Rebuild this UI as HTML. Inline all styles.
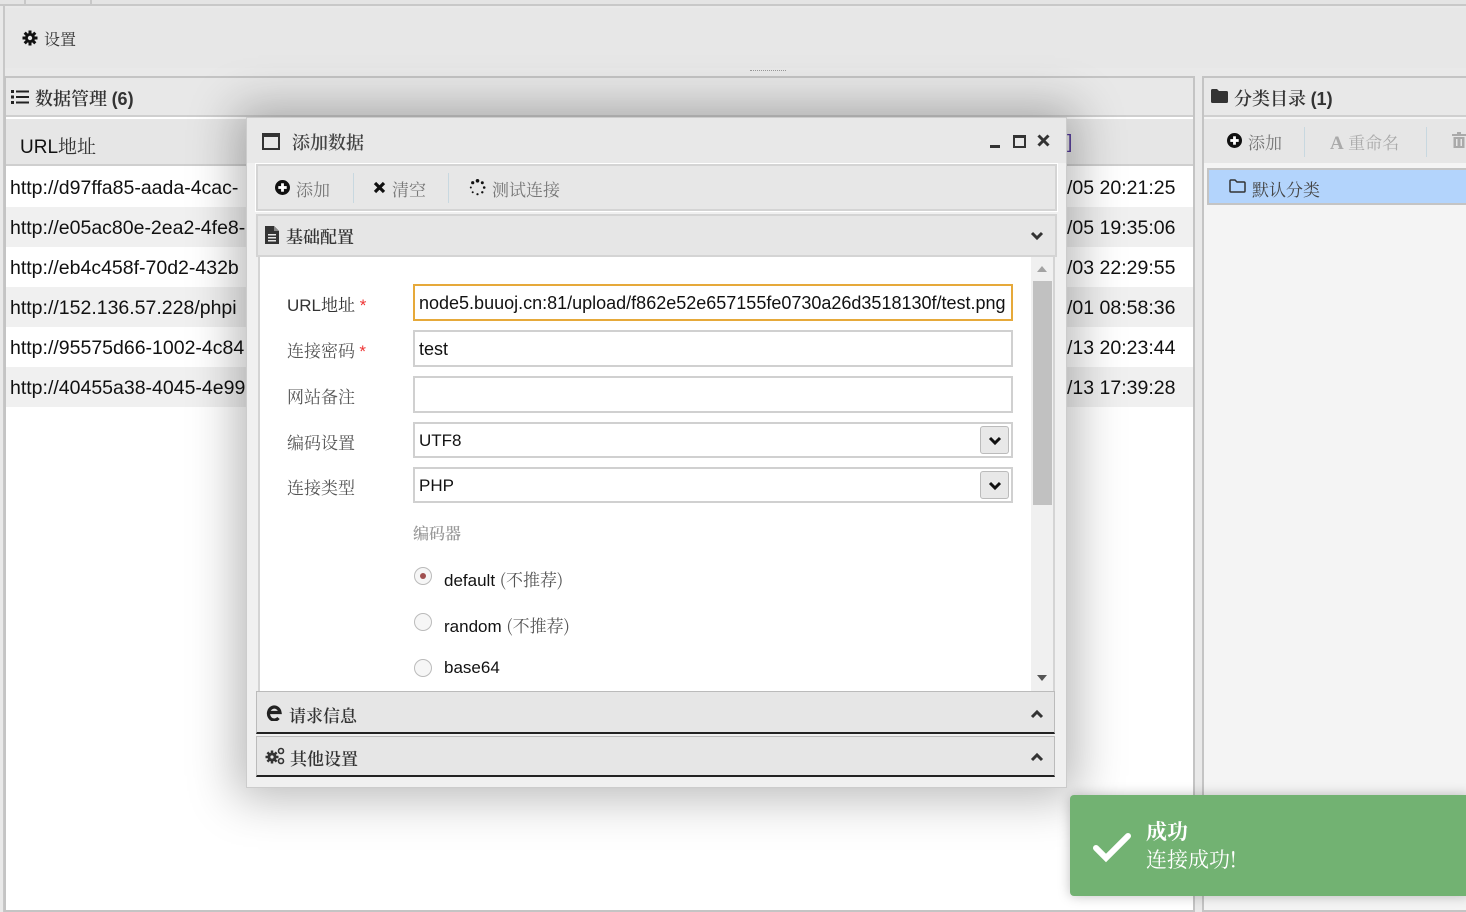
<!DOCTYPE html>
<html><head><meta charset="utf-8"><style>
*{box-sizing:border-box;margin:0;padding:0}
body{width:1466px;height:912px;overflow:hidden;background:#e9e9e9;font-family:"Liberation Sans","Noto Sans CJK SC",sans-serif;position:relative;color:#333}
.a{position:absolute}
.cn{font-family:"Noto Serif CJK SC","Liberation Serif",serif}
.url{font-family:"Liberation Sans",sans-serif;font-size:19.5px;color:#111}
svg{display:block}
</style></head><body>
<div class="a" style="left:0;top:0;width:1466px;height:6px;background:#e4e4e4;border-bottom:2px solid #c8c8c8"></div>
<div class="a" style="left:24px;top:0;width:2px;height:6px;background:#c8c8c8"></div>
<div class="a" style="left:90px;top:0;width:2px;height:6px;background:#c8c8c8"></div>
<div class="a" style="left:3px;top:6px;width:2px;height:906px;background:#c8c8c8"></div>
<div class="a" style="left:5px;top:8px;width:1461px;height:60px;background:#e7e7e7"></div>
<svg class="a" style="left:22px;top:30px" width="16" height="16" viewBox="0 0 16 16"><g fill="#111"><circle cx="8" cy="8" r="5"/><rect x="6.5" y="0.5" width="3" height="15"/><rect x="0.5" y="6.5" width="15" height="3"/><rect x="6.5" y="0.5" width="3" height="15" transform="rotate(45 8 8)"/><rect x="6.5" y="0.5" width="3" height="15" transform="rotate(-45 8 8)"/></g><circle cx="8" cy="8" r="2.2" fill="#e7e7e7"/></svg>
<div class="a cn" style="left:44px;top:27px;font-size:16px;color:#333">设置</div>
<div class="a" style="left:750px;top:70px;width:36px;border-top:1px dotted #999"></div>
<div class="a" style="left:4px;top:76px;width:1191px;height:836px;background:#fff;border:2px solid #c4c4c4"></div>
<div class="a" style="left:6px;top:78px;width:1187px;height:39px;background:#e8e8e8;border-bottom:2px solid #cfcfcf"></div>
<svg class="a" style="left:11px;top:90px" width="18" height="14" viewBox="0 0 18 14"><g fill="#222"><rect x="0" y="0" width="3" height="3"/><rect x="0" y="5.5" width="3" height="3"/><rect x="0" y="11" width="3" height="3"/><rect x="5" y="0.5" width="13" height="2"/><rect x="5" y="6" width="13" height="2"/><rect x="5" y="11.5" width="13" height="2"/></g></svg>
<div class="a cn" style="left:35px;top:85px;font-size:18px;color:#333;font-weight:600">数据管理 <b style="font-family:'Liberation Sans'">(6)</b></div>
<div class="a" style="left:6px;top:119px;width:1187px;height:47px;background:#e6e6e6;border-bottom:2px solid #cfcfcf"></div>
<div class="a" style="left:20px;top:132px;font-size:19px;color:#111">URL<span class="cn" style="color:#333">地址</span></div>
<div class="a" style="left:1067px;top:132px;font-size:19px;color:#52379a">]</div>
<div class="a" style="left:6px;top:167px;width:1187px;height:40px;background:#fff"></div>
<div class="a" style="left:6px;top:207px;width:1187px;height:40px;background:#f0f0f0"></div>
<div class="a" style="left:6px;top:247px;width:1187px;height:40px;background:#fff"></div>
<div class="a" style="left:6px;top:287px;width:1187px;height:40px;background:#f0f0f0"></div>
<div class="a" style="left:6px;top:327px;width:1187px;height:40px;background:#fff"></div>
<div class="a" style="left:6px;top:367px;width:1187px;height:40px;background:#f0f0f0"></div>
<div class="a url" style="left:10px;top:177px">http://d97ffa85-aada-4cac-</div>
<div class="a url" style="left:10px;top:217px">http://e05ac80e-2ea2-4fe8-</div>
<div class="a url" style="left:10px;top:257px">http://eb4c458f-70d2-432b</div>
<div class="a url" style="left:10px;top:297px">http://152.136.57.228/phpi</div>
<div class="a url" style="left:10px;top:337px">http://95575d66-1002-4c84</div>
<div class="a url" style="left:10px;top:377px">http://40455a38-4045-4e99</div>
<div class="a url" style="left:1067px;top:177px">/05 20:21:25</div>
<div class="a url" style="left:1067px;top:217px">/05 19:35:06</div>
<div class="a url" style="left:1067px;top:257px">/03 22:29:55</div>
<div class="a url" style="left:1067px;top:297px">/01 08:58:36</div>
<div class="a url" style="left:1067px;top:337px">/13 20:23:44</div>
<div class="a url" style="left:1067px;top:377px">/13 17:39:28</div>
<div class="a" style="left:1202px;top:76px;width:270px;height:836px;background:#f4f4f4;border:2px solid #c4c4c4"></div>
<div class="a" style="left:1204px;top:78px;width:262px;height:39px;background:#e8e8e8;border-bottom:2px solid #cfcfcf"></div>
<svg class="a" style="left:1211px;top:89px" width="17" height="14" viewBox="0 0 17 14"><path d="M0 1.5Q0 0 1.5 0H6L8 2H15.5Q17 2 17 3.5V12.5Q17 14 15.5 14H1.5Q0 14 0 12.5Z" fill="#333"/></svg>
<div class="a cn" style="left:1234px;top:85px;font-size:18px;color:#333;font-weight:600">分类目录 <b style="font-family:'Liberation Sans'">(1)</b></div>
<div class="a" style="left:1204px;top:119px;width:262px;height:44px;background:#e6e6e6"></div>
<svg class="a" style="left:1227px;top:133px" width="15" height="15" viewBox="0 0 16 16"><circle cx="8" cy="8" r="8" fill="#111"/><rect x="6.5" y="3.5" width="3" height="9" fill="#fff"/><rect x="3.5" y="6.5" width="9" height="3" fill="#fff"/></svg>
<div class="a cn" style="left:1248px;top:129px;font-size:17px;color:#777">添加</div>
<div class="a" style="left:1304px;top:127px;width:1px;height:30px;background:#c8d8e0"></div>
<div class="a cn" style="left:1330px;top:129px;font-size:17px;color:#aaa"><b style="font-family:'Liberation Serif';font-size:19px">A</b> 重命名</div>
<div class="a" style="left:1426px;top:127px;width:1px;height:30px;background:#c8d8e0"></div>
<svg class="a" style="left:1452px;top:132px" width="14" height="16" viewBox="0 0 14 16"><rect x="0" y="2" width="14" height="2" fill="#aaa"/><rect x="5" y="0" width="4" height="2" fill="#aaa"/><path d="M1.5 5H12.5V16H1.5Z" fill="#aaa"/><rect x="4" y="7" width="1.5" height="7" fill="#e6e6e6"/><rect x="8.5" y="7" width="1.5" height="7" fill="#e6e6e6"/></svg>
<div class="a" style="left:1207px;top:168px;width:259px;height:37px;background:#b3d4fc;border:2px solid #c4c4c4;border-right:none"></div>
<svg class="a" style="left:1229px;top:179px" width="17" height="14" viewBox="0 0 17 14"><path d="M1 2Q1 1 2 1H6L8 3H15Q16 3 16 4V12Q16 13 15 13H2Q1 13 1 12Z" fill="none" stroke="#333" stroke-width="1.5"/></svg>
<div class="a cn" style="left:1252px;top:176px;font-size:17px;color:#444">默认分类</div>
<!-- dialog -->
<div class="a" style="left:246px;top:117px;width:821px;height:671px;background:#f0f0f0;border:1px solid #ccc;box-shadow:0 0 45px 10px rgba(0,0,0,.28)"></div>
<div class="a" style="left:247px;top:118px;width:819px;height:45px;background:#e8e8e8"></div>
<div class="a" style="left:262px;top:133px;width:18px;height:17px;border:2px solid #333;border-top-width:4px"></div>
<div class="a cn" style="left:292px;top:129px;font-size:18px;color:#444;font-weight:600">添加数据</div>
<div class="a" style="left:990px;top:145px;width:10px;height:3px;background:#333"></div>
<div class="a" style="left:1013px;top:135px;width:13px;height:13px;border:2px solid #333;border-top-width:3px"></div>
<svg class="a" style="left:1037px;top:134px" width="13" height="13" viewBox="0 0 13 13"><path d="M1.5 1.5L11.5 11.5M11.5 1.5L1.5 11.5" stroke="#333" stroke-width="3"/></svg>
<div class="a" style="left:256px;top:164px;width:801px;height:47px;background:#e7e7e7;border:2px solid #d4d4d4;outline:1px solid #fff"></div>
<svg class="a" style="left:275px;top:180px" width="15" height="15" viewBox="0 0 16 16"><circle cx="8" cy="8" r="8" fill="#111"/><rect x="6.5" y="3.5" width="3" height="9" fill="#fff"/><rect x="3.5" y="6.5" width="9" height="3" fill="#fff"/></svg>
<div class="a cn" style="left:296px;top:176px;font-size:17px;color:#777">添加</div>
<div class="a" style="left:353px;top:173px;width:1px;height:30px;background:#c8d8e0"></div>
<svg class="a" style="left:373px;top:181px" width="13" height="13" viewBox="0 0 13 13"><path d="M2 2L11 11M11 2L2 11" stroke="#111" stroke-width="3.2"/></svg>
<div class="a cn" style="left:392px;top:176px;font-size:17px;color:#777">清空</div>
<div class="a" style="left:448px;top:173px;width:1px;height:30px;background:#c8d8e0"></div>
<svg class="a" style="left:469px;top:179px" width="17" height="17" viewBox="0 0 17 17"><g fill="#111"><circle cx="8.5" cy="1.8" r="1.8"/><circle cx="13.3" cy="3.7" r="1.5"/><circle cx="15.2" cy="8.5" r="1.3"/><circle cx="13.3" cy="13.3" r="1.2"/><circle cx="8.5" cy="15.2" r="1.1"/><circle cx="3.7" cy="13.3" r="1"/><circle cx="1.8" cy="8.5" r="1"/><circle cx="3.7" cy="3.7" r="1.6"/></g></svg>
<div class="a cn" style="left:492px;top:176px;font-size:17px;color:#777">测试连接</div>
<div class="a" style="left:256px;top:214px;width:801px;height:43px;background:#e6e6e6;border:2px solid #d4d4d4"></div>
<svg class="a" style="left:265px;top:226px" width="14" height="18" viewBox="0 0 14 18"><path d="M0 0H9L14 5V18H0Z" fill="#333"/><path d="M9 0V5H14" fill="#888"/><g fill="#e6e6e6"><rect x="3" y="8" width="8" height="1.5"/><rect x="3" y="11" width="8" height="1.5"/><rect x="3" y="14" width="8" height="1.5"/></g></svg>
<div class="a cn" style="left:286px;top:223px;font-size:17px;color:#333;font-weight:600">基础配置</div>
<svg class="a" style="left:1030px;top:231px" width="14" height="10" viewBox="0 0 14 10"><path d="M2 2L7 7L12 2" stroke="#333" stroke-width="3" fill="none"/></svg>
<div class="a" style="left:258px;top:257px;width:797px;height:434px;background:#fff;border-left:2px solid #d4d4d4;border-right:2px solid #d4d4d4"></div>
<div class="a" style="left:1031px;top:257px;width:22px;height:434px;background:#f0f0f0"></div>
<div class="a" style="left:1033px;top:281px;width:19px;height:224px;background:#c1c1c1"></div>
<div class="a" style="left:1037px;top:266px;border:5px solid transparent;border-bottom:6px solid #a3a3a3;border-top:0"></div>
<div class="a" style="left:1037px;top:675px;border:5px solid transparent;border-top:6px solid #555;border-bottom:0"></div>
<div class="a" style="left:287px;top:291px;font-size:17px;color:#333">URL<span class="cn">地址</span> <span style="color:#e33">*</span></div>
<div class="a cn" style="left:287px;top:337px;font-size:17px;color:#555">连接密码 <span style="color:#e33;font-family:'Liberation Sans'">*</span></div>
<div class="a cn" style="left:287px;top:383px;font-size:17px;color:#555">网站备注</div>
<div class="a cn" style="left:287px;top:429px;font-size:17px;color:#555">编码设置</div>
<div class="a cn" style="left:287px;top:474px;font-size:17px;color:#555">连接类型</div>
<div class="a" style="left:413px;top:284px;width:600px;height:37px;border:2px solid #e6a93a;background:#fff;font-size:18px;color:#111;padding:7px 4px;white-space:nowrap;overflow:hidden">node5.buuoj.cn:81/upload/f862e52e657155fe0730a26d3518130f/test.png</div>
<div class="a" style="left:413px;top:330px;width:600px;height:37px;border:2px solid #d0d0d0;background:#fff;font-size:18px;color:#111;padding:7px 4px">test</div>
<div class="a" style="left:413px;top:376px;width:600px;height:37px;border:2px solid #d0d0d0;background:#fff"></div>
<div class="a" style="left:413px;top:422px;width:600px;height:36px;border:2px solid #d0d0d0;background:#fff;font-size:17px;color:#111;padding:7px 4px">UTF8</div>
<div class="a" style="left:980px;top:426px;width:29px;height:28px;background:#e8e8e8;border:1px solid #bbb;border-radius:3px"><svg style="margin:9px 0 0 7px" width="14" height="10" viewBox="0 0 14 10"><path d="M2 2L7 7L12 2" stroke="#111" stroke-width="3" fill="none"/></svg></div>
<div class="a" style="left:413px;top:467px;width:600px;height:36px;border:2px solid #d0d0d0;background:#fff;font-size:17px;color:#111;padding:7px 4px">PHP</div>
<div class="a" style="left:980px;top:471px;width:29px;height:28px;background:#e8e8e8;border:1px solid #bbb;border-radius:3px"><svg style="margin:9px 0 0 7px" width="14" height="10" viewBox="0 0 14 10"><path d="M2 2L7 7L12 2" stroke="#111" stroke-width="3" fill="none"/></svg></div>
<div class="a cn" style="left:413px;top:521px;font-size:16px;color:#999;font-weight:600">编码器</div>
<div class="a" style="left:414px;top:567px;width:18px;height:18px;border:1.5px solid #bbb;border-radius:50%;background:#f6f6f6"></div>
<div class="a" style="left:420px;top:573px;width:6px;height:6px;border-radius:50%;background:#a05050"></div>
<div class="a" style="left:444px;top:566px;font-size:17px;color:#111">default <span class="cn" style="color:#555">(不推荐)</span></div>
<div class="a" style="left:414px;top:613px;width:18px;height:18px;border:1.5px solid #bbb;border-radius:50%;background:#f6f6f6"></div>
<div class="a" style="left:444px;top:612px;font-size:17px;color:#111">random <span class="cn" style="color:#555">(不推荐)</span></div>
<div class="a" style="left:414px;top:659px;width:18px;height:18px;border:1.5px solid #bbb;border-radius:50%;background:#f6f6f6"></div>
<div class="a" style="left:444px;top:658px;font-size:17px;color:#111">base64</div>
<div class="a" style="left:256px;top:691px;width:799px;height:43px;background:#e6e6e6;border:1px solid #bbb;border-bottom:2px solid #222"></div>
<svg class="a" style="left:266px;top:703px" width="17" height="18" viewBox="0 0 17 18"><path d="M2.5 9.5H14A5.8 6.5 0 1 0 12.5 15" stroke="#222" stroke-width="3.2" fill="none"/></svg>
<div class="a cn" style="left:289px;top:702px;font-size:17px;color:#333;font-weight:600">请求信息</div>
<svg class="a" style="left:1030px;top:709px" width="14" height="10" viewBox="0 0 14 10"><path d="M2 8L7 3L12 8" stroke="#333" stroke-width="3" fill="none"/></svg>
<div class="a" style="left:256px;top:736px;width:799px;height:41px;background:#e6e6e6;border:1px solid #bbb;border-bottom:2px solid #222"></div>
<svg class="a" style="left:265px;top:747px" width="20" height="18" viewBox="0 0 20 18"><g fill="#333"><circle cx="7" cy="10" r="4.5"/><g stroke="#333" stroke-width="2.5"><path d="M7 3.5V16.5M0.5 10H13.5M2.4 5.4L11.6 14.6M11.6 5.4L2.4 14.6"/></g><circle cx="7" cy="10" r="1.6" fill="#e6e6e6"/><circle cx="16" cy="4" r="2.5" fill="none" stroke="#333" stroke-width="1.6"/><circle cx="16" cy="14" r="2.5" fill="none" stroke="#333" stroke-width="1.6"/></g></svg>
<div class="a cn" style="left:290px;top:745px;font-size:17px;color:#333;font-weight:600">其他设置</div>
<svg class="a" style="left:1030px;top:752px" width="14" height="10" viewBox="0 0 14 10"><path d="M2 8L7 3L12 8" stroke="#333" stroke-width="3" fill="none"/></svg>
<!-- toast -->
<div class="a" style="left:1070px;top:795px;width:400px;height:101px;background:#72b272;border-radius:4px;box-shadow:0 0 12px rgba(0,0,0,.25)"></div>
<svg class="a" style="left:1092px;top:831px" width="40" height="32"><path d="M4 17 L14 27 L36 5" stroke="#fff" stroke-width="6" fill="none" stroke-linecap="round"/></svg>
<div class="a cn" style="left:1146px;top:818px;font-size:21px;color:#fff;font-weight:bold;line-height:26px">成功</div>
<div class="a cn" style="left:1146px;top:846px;font-size:21px;color:#fff;line-height:26px">连接成功!</div>
</body></html>
